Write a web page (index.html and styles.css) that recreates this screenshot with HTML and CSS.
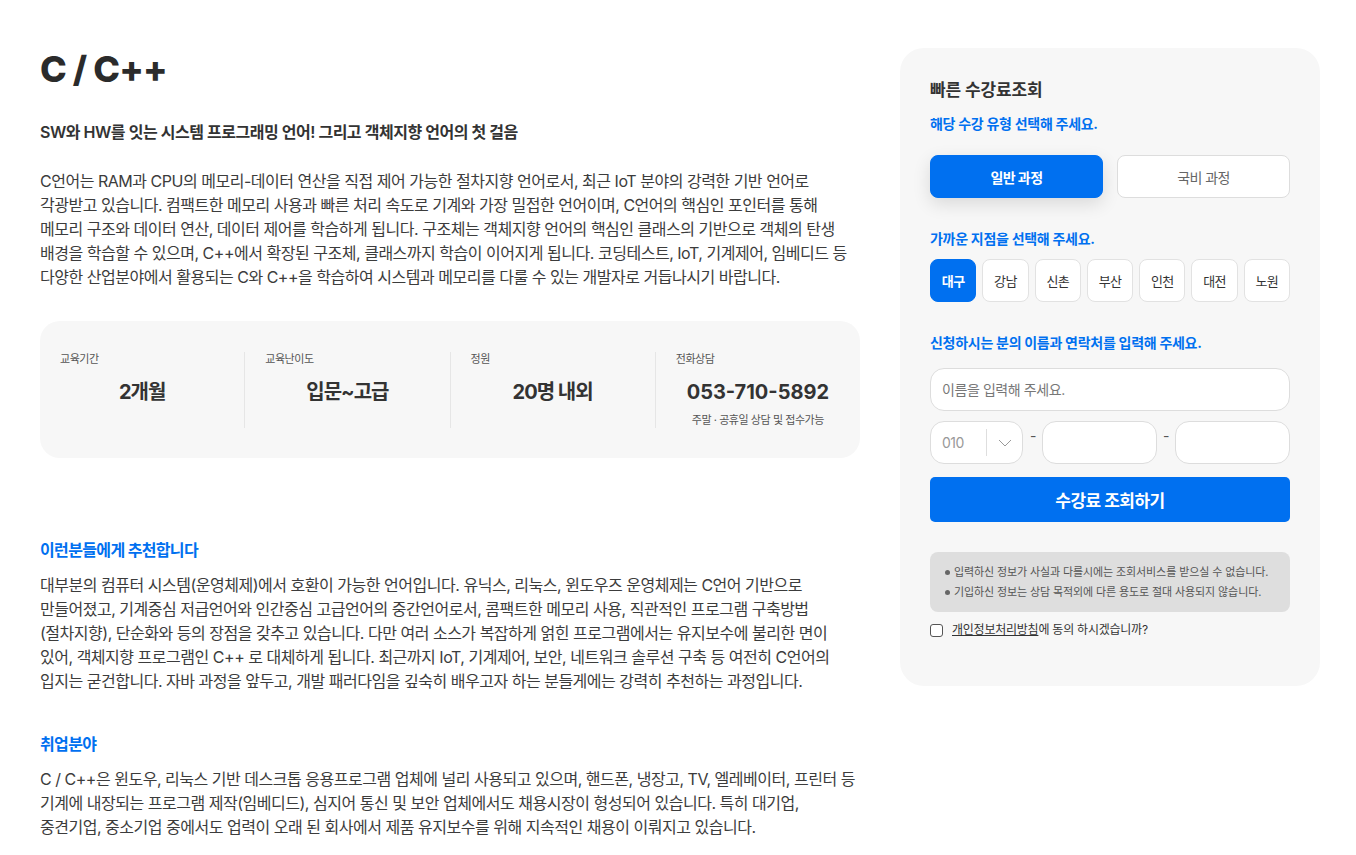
FILE: index.html
```html
<!DOCTYPE html>
<html lang="ko">

<head>
    <meta charset="UTF-8">
    <meta name="viewport" content="width=device-width, initial-scale=1.0">
    <title>C / C++ 과정</title>
    <link rel="stylesheet" href="styles.css">
</head>

<body>
    <div class="page">
        <div class="course-detail">
            <h1 class="course-title">C / C++</h1>
            <p class="course-subtitle">SW와 HW를 잇는 시스템 프로그래밍 언어! 그리고 객체지향 언어의 첫 걸음</p>
            <p class="course-desc">
                C언어는 RAM과 CPU의 메모리-데이터 연산을 직접 제어 가능한 절차지향 언어로서, 최근 IoT 분야의 강력한 기반 언어로<br>
                각광받고 있습니다. 컴팩트한 메모리 사용과 빠른 처리 속도로 기계와 가장 밀접한 언어이며, C언어의 핵심인 포인터를 통해<br>
                메모리 구조와 데이터 연산, 데이터 제어를 학습하게 됩니다. 구조체는 객체지향 언어의 핵심인 클래스의 기반으로 객체의 탄생<br>
                배경을 학습할 수 있으며, C++에서 확장된 구조체, 클래스까지 학습이 이어지게 됩니다. 코딩테스트, IoT, 기계제어, 임베디드 등<br>
                다양한 산업분야에서 활용되는 C와 C++을 학습하여 시스템과 메모리를 다룰 수 있는 개발자로 거듭나시기 바랍니다.
            </p>

            <div class="info-box">
                <div class="info-item">
                    <span class="info-label">교육기간</span>
                    <strong class="info-value">2개월</strong>
                </div>
                <div class="info-item">
                    <span class="info-label">교육난이도</span>
                    <strong class="info-value">입문~고급</strong>
                </div>
                <div class="info-item">
                    <span class="info-label">정원</span>
                    <strong class="info-value">20명 내외</strong>
                </div>
                <div class="info-item">
                    <span class="info-label">전화상담</span>
                    <strong class="info-value info-phone">053-710-5892</strong>
                    <span class="info-note">주말 · 공휴일 상담 및 접수가능</span>
                </div>
            </div>

            <section class="detail-section first">
                <h2 class="section-title">이런분들에게 추천합니다</h2>
                <p class="section-text">
                    대부분의 컴퓨터 시스템(운영체제)에서 호환이 가능한 언어입니다. 유닉스, 리눅스, 윈도우즈 운영체제는 C언어 기반으로<br>
                    만들어졌고, 기계중심 저급언어와 인간중심 고급언어의 중간언어로서, 콤팩트한 메모리 사용, 직관적인 프로그램 구축방법<br>
                    (절차지향), 단순화와 등의 장점을 갖추고 있습니다. 다만 여러 소스가 복잡하게 얽힌 프로그램에서는 유지보수에 불리한 면이<br>
                    있어, 객체지향 프로그램인 C++ 로 대체하게 됩니다. 최근까지 IoT, 기계제어, 보안, 네트워크 솔루션 구축 등 여전히 C언어의<br>
                    입지는 굳건합니다. 자바 과정을 앞두고, 개발 패러다임을 깊숙히 배우고자 하는 분들게에는 강력히 추천하는 과정입니다.
                </p>
            </section>

            <section class="detail-section">
                <h2 class="section-title">취업분야</h2>
                <p class="section-text">
                    C / C++은 윈도우, 리눅스 기반 데스크톱 응용프로그램 업체에 널리 사용되고 있으며, 핸드폰, 냉장고, TV, 엘레베이터, 프린터 등<br>
                    기계에 내장되는 프로그램 제작(임베디드), 심지어 통신 및 보안 업체에서도 채용시장이 형성되어 있습니다. 특히 대기업,<br>
                    중견기업, 중소기업 중에서도 업력이 오래 된 회사에서 제품 유지보수를 위해 지속적인 채용이 이뤄지고 있습니다.
                </p>
            </section>
        </div>

        <aside class="fee-panel">
            <h3 class="panel-title">빠른 수강료조회</h3>

            <p class="panel-step">해당 수강 유형 선택해 주세요.</p>
            <div class="type-group">
                <button class="type-btn active">일반 과정</button>
                <button class="type-btn">국비 과정</button>
            </div>

            <p class="panel-step step-gap">가까운 지점을 선택해 주세요.</p>
            <div class="branch-group">
                <button class="branch-btn active">대구</button>
                <button class="branch-btn">강남</button>
                <button class="branch-btn">신촌</button>
                <button class="branch-btn">부산</button>
                <button class="branch-btn">인천</button>
                <button class="branch-btn">대전</button>
                <button class="branch-btn">노원</button>
            </div>

            <p class="panel-step step-gap">신청하시는 분의 이름과 연락처를 입력해 주세요.</p>
            <input class="text-input name-input" type="text" placeholder="이름을 입력해 주세요.">

            <div class="phone-row">
                <div class="phone-select">
                    <span class="phone-prefix">010</span>
                    <span class="select-arrow">
                        <svg width="14" height="8" viewBox="0 0 14 8">
                            <path d="M1 1l6 6 6-6" fill="none" stroke="#9a9a9a" stroke-width="1"/>
                        </svg>
                    </span>
                </div>
                <span class="phone-dash">-</span>
                <input class="text-input phone-input" type="text">
                <span class="phone-dash">-</span>
                <input class="text-input phone-input" type="text">
            </div>

            <button class="submit-btn">수강료 조회하기</button>

            <ul class="notice">
                <li>입력하신 정보가 사실과 다를시에는 조회서비스를 받으실 수 없습니다.</li>
                <li>기입하신 정보는 상담 목적외에 다른 용도로 절대 사용되지 않습니다.</li>
            </ul>

            <label class="agree">
                <input type="checkbox" class="agree-check">
                <span><a href="#" class="agree-link">개인정보처리방침</a>에 동의 하시겠습니까?</span>
            </label>
        </aside>
    </div>
</body>

</html>
```

FILE: styles.css
```css
:root {
    --blue: #0070f0;
    --text: #333333;
    --muted: #555555;
    --panel-bg: #f7f7f7;
    --line: #dddddd;
}

* {
    margin: 0;
    padding: 0;
    box-sizing: border-box;
}

body {
    font-family: 'Inter', 'Noto Sans CJK KR', sans-serif;
    color: var(--text);
    background-color: #ffffff;
}

button,
input {
    font-family: inherit;
}

.page {
    display: flex;
    align-items: flex-start;
    gap: 40px;
    padding: 48px 36px 0 40px;
}

/* Left column */
.course-detail {
    width: 820px;
    flex-shrink: 0;
}

.course-title {
    font-size: 36px;
    line-height: 43px;
    font-weight: 800;
    color: #2b2b2b;
    letter-spacing: -0.025em;
}

.course-subtitle {
    margin-top: 29px;
    font-size: 16px;
    line-height: 24px;
    font-weight: 600;
    letter-spacing: -0.03em;
}

.course-desc,
.section-text {
    font-size: 16px;
    line-height: 24px;
    color: #3c3c3c;
    letter-spacing: -0.03em;
    white-space: nowrap;
}

.course-desc {
    margin-top: 25px;
}

.info-box {
    display: flex;
    margin-top: 32px;
    padding: 31px 0 30px;
    background-color: var(--panel-bg);
    border-radius: 20px;
}

.info-item {
    flex: 1;
    display: flex;
    flex-direction: column;
    padding: 0 20px;
}

.info-item + .info-item {
    border-left: 1px solid #e6e6e6;
}

.info-label {
    font-size: 11px;
    line-height: 14px;
    color: var(--muted);
    letter-spacing: -0.04em;
}

.info-value {
    margin-top: 12px;
    font-size: 20px;
    line-height: 28px;
    font-weight: 700;
    text-align: center;
    letter-spacing: -0.05em;
}

.info-phone {
    letter-spacing: 0;
}

.info-note {
    margin-top: 6px;
    font-size: 11px;
    line-height: 16px;
    color: var(--muted);
    text-align: center;
    letter-spacing: -0.04em;
}

.detail-section {
    margin-top: 39px;
}

.detail-section.first {
    margin-top: 80px;
}

.section-title {
    font-size: 16px;
    line-height: 24px;
    font-weight: 700;
    color: var(--blue);
    letter-spacing: -0.04em;
}

.section-text {
    margin-top: 11px;
}

/* Right panel */
.fee-panel {
    width: 420px;
    flex-shrink: 0;
    padding: 30px 30px 48px;
    background-color: var(--panel-bg);
    border-radius: 24px;
}

.panel-title {
    font-size: 17px;
    line-height: 24px;
    font-weight: 600;
    letter-spacing: -0.01em;
}

.panel-step {
    margin-top: 12px;
    font-size: 14px;
    line-height: 20px;
    font-weight: 700;
    color: var(--blue);
    letter-spacing: -0.02em;
}

.panel-step.step-gap {
    margin-top: 31px;
}

.type-group {
    display: flex;
    gap: 14px;
    margin-top: 21px;
}

.type-btn {
    flex: 1;
    height: 43px;
    font-size: 14px;
    color: #666666;
    background-color: #ffffff;
    border: 1px solid var(--line);
    border-radius: 8px;
    letter-spacing: -0.04em;
    cursor: pointer;
}

.type-btn.active {
    color: #ffffff;
    font-weight: 700;
    background-color: var(--blue);
    border-color: var(--blue);
    box-shadow: 0 6px 18px rgba(0, 0, 0, 0.12);
}

.branch-group {
    display: flex;
    gap: 6px;
    margin-top: 10px;
}

.branch-btn {
    flex: 1;
    height: 43px;
    font-size: 13px;
    color: var(--text);
    background-color: #ffffff;
    border: 1px solid #e2e2e2;
    border-radius: 8px;
    letter-spacing: -0.05em;
    cursor: pointer;
}

.branch-btn.active {
    color: #ffffff;
    font-weight: 700;
    background-color: var(--blue);
    border-color: var(--blue);
}

.text-input {
    height: 43px;
    padding: 0 11px;
    font-size: 14px;
    color: var(--text);
    background-color: #ffffff;
    border: 1px solid var(--line);
    border-radius: 14px;
    outline: none;
}

.text-input::placeholder {
    color: #777777;
    letter-spacing: -0.03em;
}

.name-input {
    display: block;
    width: 100%;
    margin-top: 15px;
}

.phone-row {
    display: flex;
    gap: 6px;
    margin-top: 10px;
}

.phone-select {
    display: flex;
    align-items: center;
    width: 93px;
    height: 43px;
    margin-right: 1px;
    background-color: #ffffff;
    border: 1px solid var(--line);
    border-radius: 14px;
}

.phone-prefix {
    width: 55px;
    padding-left: 11px;
    font-size: 14px;
    color: #999999;
    letter-spacing: -0.04em;
}

.select-arrow {
    flex: 1;
    display: flex;
    align-items: center;
    justify-content: center;
    height: 27px;
    border-left: 1px solid #dedede;
}

.phone-dash {
    width: 6px;
    padding-top: 6px;
    font-size: 14px;
    line-height: 18px;
    color: #555555;
}

.phone-input {
    flex: 1;
    min-width: 0;
}

.submit-btn {
    display: block;
    width: 100%;
    height: 45px;
    margin-top: 13px;
    font-size: 17px;
    font-weight: 700;
    color: #ffffff;
    background-color: var(--blue);
    border: none;
    border-radius: 5px;
    letter-spacing: -0.03em;
    cursor: pointer;
}

.notice {
    margin-top: 30px;
    padding: 10px 15px;
    list-style: none;
    background-color: #dedede;
    border-radius: 8px;
}

.notice li {
    display: flex;
    align-items: center;
    gap: 4px;
    font-size: 11px;
    line-height: 20px;
    color: var(--muted);
    letter-spacing: -0.01em;
}

.notice li::before {
    content: "";
    width: 5px;
    height: 5px;
    border-radius: 50%;
    background-color: #666666;
}

.agree {
    display: flex;
    align-items: center;
    gap: 9px;
    margin-top: 10px;
    font-size: 12px;
    line-height: 16px;
    color: var(--text);
    letter-spacing: -0.02em;
}

.agree-check {
    appearance: none;
    width: 13px;
    height: 13px;
    margin: 0;
    background-color: #ffffff;
    border: 1px solid #555555;
    border-radius: 3px;
}

.agree-link {
    color: var(--text);
    text-decoration: underline;
}
```
